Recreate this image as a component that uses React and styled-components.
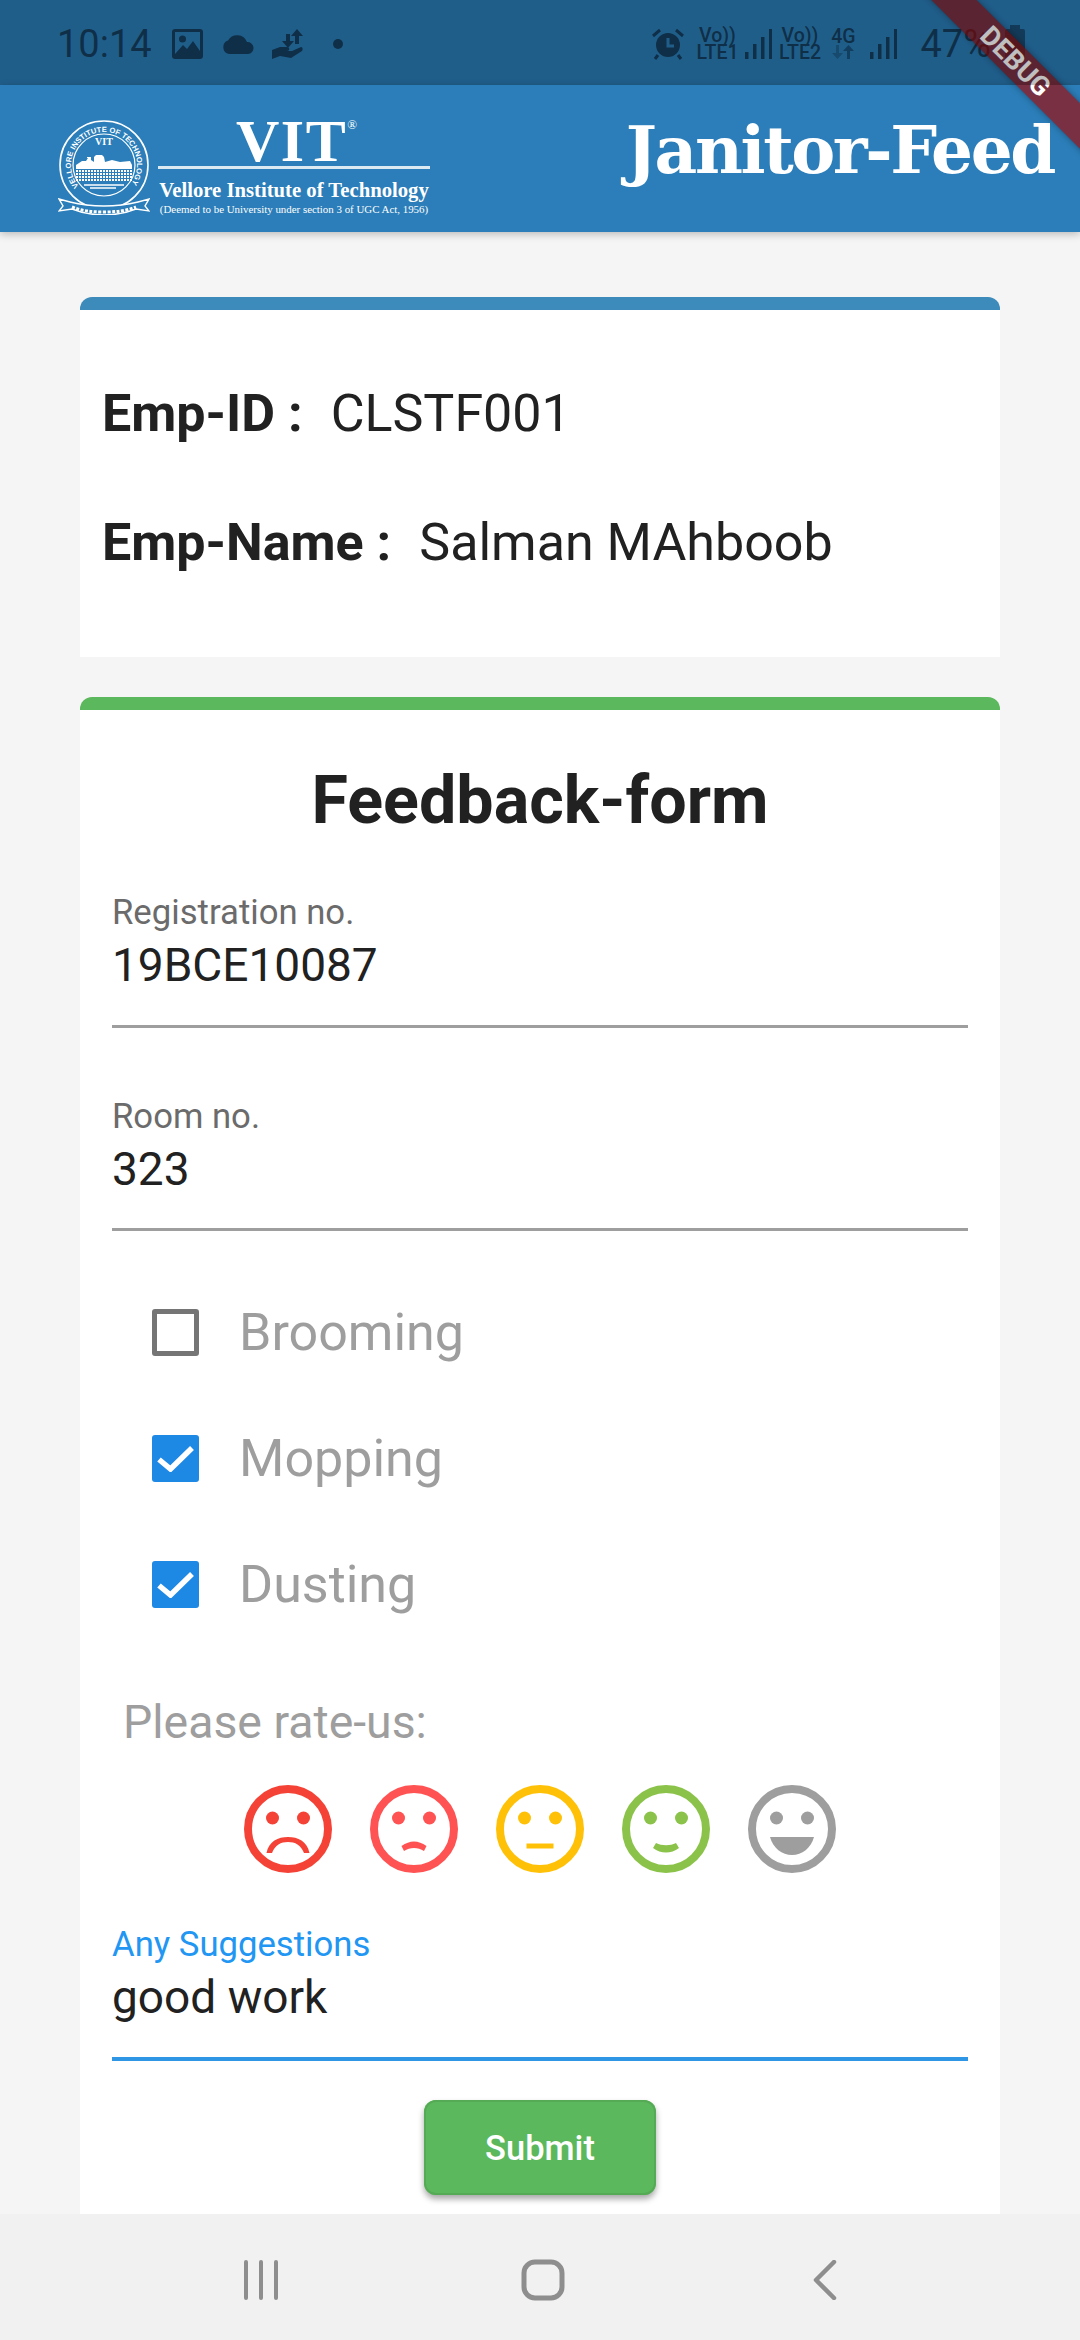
import React from "react";
import styled, { createGlobalStyle } from "styled-components";

const Global = createGlobalStyle`
  html, body { margin: 0; padding: 0; background: #f5f5f5; }
  * { box-sizing: border-box; }
`;

const Page = styled.div`
  position: relative;
  width: 1080px;
  height: 2340px;
  overflow: hidden;
  display: flex;
  flex-direction: column;
  background: #f5f5f5;
  font-family: Roboto, "Liberation Sans", sans-serif;
  color: #212121;
`;
const StatusBar = styled.div`
  height: 85px;
  flex: none;
  background: #2b7eb9;
  color: #153f60;
  display: flex;
  align-items: center;
  justify-content: space-between;
  padding: 2px 55px 0 57px;
`;
const Scrim = styled.div`
  position: absolute;
  z-index: 6;
  left: 0;
  top: 0;
  width: 100%;
  height: 85px;
  background: rgba(0, 0, 0, 0.25);
  pointer-events: none;
`;
const StatusGroup = styled.div`
  display: flex;
  align-items: center;
`;
const Clock = styled.span`
  font-size: 38px;
  margin-right: 20px;
`;
const Net = styled.div`
  display: flex;
  flex-direction: column;
  align-items: center;
  width: ${(p) => p.$width}px;
  margin-left: ${(p) => p.$left}px;
  margin-right: ${(p) => p.$right}px;
  font-size: 19.5px;
  font-weight: 500;
  line-height: 17px;
  white-space: nowrap;
`;
const Battery = styled.span`
  font-size: 38px;
  margin: 0 14px 0 23px;
`;
const BatteryIcon = styled.div`
  position: relative;
  width: 20px;
  height: 30px;
  background: #153f60;
  border-radius: 2px;
  opacity: 0.75;
  &::before {
    content: "";
    position: absolute;
    top: -4px;
    left: 5px;
    width: 10px;
    height: 4px;
    background: #153f60;
  }
`;
const AppBar = styled.header`
  position: relative;
  z-index: 1;
  height: 147px;
  flex: none;
  background: #2b7eb9;
  box-shadow: 0 2px 8px rgba(0, 0, 0, 0.25);
  display: flex;
  align-items: center;
  justify-content: space-between;
  padding: 0 26px 2px 58px;
`;
const Brand = styled.div`
  display: flex;
  align-items: center;
  gap: 8px;
  color: #fff;
  margin-top: 18px;
`;
const Wordmark = styled.div`
  width: 272px;
  display: flex;
  flex-direction: column;
  align-items: center;
  font-family: "Liberation Serif", serif;
  white-space: nowrap;
`;
const Vit = styled.div`
  font-size: 60px;
  line-height: 46px;
  letter-spacing: 1.5px;
  height: 46px;
  font-weight: 700;
  margin-left: 5px;
  & sup {
    font-size: 13px;
    font-weight: 400;
    line-height: 0;
    vertical-align: 32px;
    letter-spacing: 0;
  }
`;
const Rule = styled.div`
  width: 100%;
  height: 3px;
  background: #dbe9f3;
  margin-top: 2px;
`;
const Tagline = styled.div`
  font-size: 20.7px;
  font-weight: 700;
  line-height: 26px;
  margin-top: 8px;
`;
const Legal = styled.div`
  font-size: 10.9px;
  line-height: 12px;
`;
const Title = styled.h1`
  margin: 0 0 15px;
  color: #fff;
  font-family: "DejaVu Serif", serif;
  font-weight: 700;
  font-size: 66px;
  line-height: 1;
  letter-spacing: -2.4px;
`;
const Content = styled.main`
  flex: 1;
  min-height: 0;
  padding: 65px 80px 0;
  display: flex;
  flex-direction: column;
  gap: 40px;
`;
const Card = styled.section`
  background: #fff;
  border-top: 13px solid ${(p) => p.$accent};
  border-radius: 12px 12px 0 0;
  height: ${(p) => p.$height}px;
  flex: none;
`;
const InfoRows = styled.div`
  padding: 73px 22px 0;
  display: flex;
  flex-direction: column;
  gap: 69px;
`;
const InfoRow = styled.div`
  display: flex;
  align-items: center;
  height: 60px;
  font-size: 52px;
  white-space: nowrap;
`;
const InfoLabel = styled.b`
  font-weight: 700;
  margin-right: 28px;
`;
const Form = styled.div`
  padding: 0 32px;
  display: flex;
  flex-direction: column;
`;
const FormTitle = styled.h2`
  margin: 52px 0 0;
  height: 76px;
  font-size: 66.4px;
  line-height: 76px;
  font-weight: 700;
  text-align: center;
`;
const Field = styled.div`
  height: ${(p) => p.$height}px;
  margin-top: ${(p) => p.$top}px;
  border-bottom: ${(p) => (p.$active ? "4px solid #2f96e6" : "3px solid #9e9e9e")};
`;
const FieldLabel = styled.div`
  font-size: 34.7px;
  line-height: 40px;
  color: ${(p) => (p.$active ? "#2196f3" : "#6b6b6b")};
`;
const FieldValue = styled.div`
  font-size: 46px;
  line-height: 56px;
  margin-top: 5px;
`;
const Checks = styled.div`
  margin: 71px 0 0 40px;
  display: flex;
  flex-direction: column;
  gap: 66px;
`;
const CheckRow = styled.div`
  height: 60px;
  display: flex;
  align-items: center;
  gap: 40px;
  font-size: 52px;
  color: #9e9e9e;
`;
const Box = styled.div`
  width: 47px;
  height: 47px;
  flex: none;
  border-radius: 3px;
  background: ${(p) => (p.$on ? "#1e88e5" : "#fff")};
  border: ${(p) => (p.$on ? "none" : "5px solid #757575")};
  display: flex;
  align-items: center;
  justify-content: center;
`;
const RateLabel = styled.div`
  margin: 83px 0 0 11px;
  height: 50px;
  line-height: 50px;
  font-size: 46.4px;
  color: #9e9e9e;
`;
const Faces = styled.div`
  margin-top: 38px;
  display: flex;
  justify-content: center;
  gap: 38px;
`;
const SubmitRow = styled.div`
  margin-top: 39px;
  display: flex;
  justify-content: center;
`;
const Submit = styled.button`
  width: 232px;
  height: 95px;
  border: none;
  border-radius: 12px;
  background: #5cb85c;
  color: #fff;
  font-family: Roboto, sans-serif;
  font-size: 34.5px;
  font-weight: 500;
  box-shadow: 0 4px 6px rgba(0, 0, 0, 0.35), inset 0 0 0 2px #55ab55;
`;
const NavBar = styled.nav`
  height: 126px;
  flex: none;
  background: #f1f1f1;
  display: grid;
  grid-template-columns: repeat(3, 282px);
  align-items: center;
  padding: 6px 0 0 120px;
`;
const NavSlot = styled.div`
  display: flex;
  justify-content: center;
`;
const Ribbon = styled.div`
  position: absolute;
  z-index: 5;
  left: 884px;
  top: 44px;
  width: 260px;
  height: 32px;
  padding-left: 4px;
  transform: rotate(45deg);
  background: rgba(168, 4, 0, 0.64);
  box-shadow: 0 0 7px rgba(0, 0, 0, 0.35);
  color: #fff;
  font-family: Roboto, sans-serif;
  font-weight: 700;
  font-size: 27px;
  line-height: 32px;
  text-align: center;
`;

const SK = "#153f60";
const HOLE = "#2b7eb9";
const Picture = () => (
  <svg width="31" height="30" viewBox="0 0 31 30" style={{ marginRight: 18 }}>
    <rect width="31" height="30" rx="3" fill={SK} />
    <rect x="3" y="3" width="25" height="24" fill={HOLE} />
    <circle cx="10.5" cy="10" r="3.5" fill={SK} />
    <path d="M3 25 L11 16 L15 20 L21 12 L28 22 V27 H3 Z" fill={SK} />
  </svg>
);
const Cloud = () => (
  <svg width="34" height="20" viewBox="0 0 34 20" style={{ marginRight: 17 }}>
    <path d="M8 20 A7 7 0 0 1 7 6.5 A10.5 10.5 0 0 1 26 8 A6 6 0 0 1 27 20 Z" fill={SK} />
  </svg>
);
const HandTransfer = () => (
  <svg width="32" height="30" viewBox="0 0 32 30" style={{ marginRight: 29 }}>
    <path d="M25 0 L31 7 H27 V15 H23 V7 H19 Z M14 5 H18 V12 H22 L16 19 L10 12 H14 Z" fill={SK} />
    <path d="M0 21 L8 18 H15 C18 18 18 22 15 22 H11 L20 22 L29 18 C31 18 31 21 30 22 L19 29 L8 27 L0 30 Z" fill={SK} />
  </svg>
);
const Dot = () => (
  <svg width="10" height="10" viewBox="0 0 10 10">
    <circle cx="5" cy="5" r="5" fill={SK} />
  </svg>
);
const Alarm = () => (
  <svg width="32" height="32" viewBox="0 0 32 32">
    <circle cx="16" cy="17" r="12" fill={SK} />
    <path d="M16 10 V18 H22" stroke={HOLE} strokeWidth="3" fill="none" />
    <path d="M1 8 L8 2 M31 8 L24 2 M6 27 L3 31 M26 27 L29 31" stroke={SK} strokeWidth="3" />
  </svg>
);
const Signal = () => (
  <svg width="27" height="30" viewBox="0 0 27 30">
    <rect x="0" y="23" width="3.5" height="7" fill={SK} />
    <rect x="8" y="15" width="3.5" height="15" fill={SK} />
    <rect x="16" y="8" width="3.5" height="22" fill={SK} />
    <rect x="24" y="0" width="3" height="30" fill={SK} />
  </svg>
);
const DataArrows = () => (
  <svg width="24" height="14" viewBox="0 0 24 14">
    <path d="M5 0 H8 V8 H12 L6.5 14 L1 8 H5 Z" fill="#1f6391" />
    <path d="M16 14 H19 V6 H23 L17.5 0 L12 6 H16 Z" fill="#185480" />
  </svg>
);

const Seal = () => (
  <svg width="92" height="96" viewBox="0 0 92 96">
    <defs>
      <path id="sealArc" d="M20.7 67.2 A33 33 0 1 1 71.3 67.2" />
      <pattern id="bricks" width="3" height="3" patternUnits="userSpaceOnUse">
        <rect width="2" height="2" fill="#fff" />
      </pattern>
    </defs>
    <circle cx="46" cy="46" r="44" fill="none" stroke="#fff" strokeWidth="1.6" />
    <circle cx="46" cy="46" r="31" fill="none" stroke="#fff" strokeWidth="1.2" />
    <text fontFamily="Liberation Sans, sans-serif" fontSize="7.6" fontWeight="700" fill="#fff">
      <textPath href="#sealArc">VELLORE INSTITUTE OF TECHNOLOGY</textPath>
    </text>
    <text x="46" y="26" textAnchor="middle" fontFamily="Liberation Serif, serif" fontWeight="700" fontSize="10" fill="#fff">VIT</text>
    <path d="M18 46 L24 42 H28 L30 39 H29 V38 H33 V41 L36 43 V38 L38 36 H44 L46 38 L47 43 L54 41 L62 43 L72 42 L74 46 V50 H18 Z" fill="#fff" />
    <rect x="18" y="49" width="56" height="14" fill="url(#bricks)" />
    <path d="M26 66 H66 M32 69 H58" stroke="#fff" strokeWidth="1.4" />
    <path d="M1 80 L12 83 C24 86 34 87 46 87 C58 87 68 86 80 83 L91 80 L87 87 L91 92 L78 90 C68 94 58 96 46 96 C34 96 24 94 14 90 L1 92 L5 87 Z" fill="#2b7eb9" stroke="#fff" strokeWidth="1.4" />
    <path d="M14 88 C24 92 34 93 46 93 C58 93 68 92 78 88" fill="none" stroke="#fff" strokeWidth="3" strokeDasharray="3 1.5" />
  </svg>
);

const Check = () => (
  <svg width="37" height="28" viewBox="0 0 37 28">
    <path d="M2 15.5 L13.5 25 L35 4" fill="none" stroke="#fff" strokeWidth="5.5" />
  </svg>
);

const mouths = [
  <path key="0" d="M22.5 68 C25 56 34 52 44 52 C54 52 63 56 65.5 68 H60 C57 60 51 57 44 57 C37 57 31 60 28 68 Z" />,
  <path key="1" d="M31.5 61 C40 55 48 55 56.5 61 L54 66 C48 62 40 62 34 66 Z" />,
  <rect key="2" x="30.5" y="58.5" width="27" height="5" />,
  <path key="3" d="M34 58 C40 61 48 61 54 58 L57 63 C49 69 39 69 31 63 Z" />,
  <path key="4" d="M22 52 H66 C63 63 54 70 44 70 C34 70 25 63 22 52 Z" />,
];
const faceColors = ["#f44336", "#ff5252", "#ffc107", "#8bc34a", "#9e9e9e"];

const Face = ({ index }) => (
  <svg width="88" height="88" viewBox="0 0 88 88" fill={faceColors[index]}>
    <circle cx="44" cy="44" r="40" fill="none" stroke={faceColors[index]} strokeWidth="8" />
    <circle cx="28.5" cy="33" r="6.5" />
    <circle cx="59.5" cy="33" r="6.5" />
    {mouths[index]}
  </svg>
);

const CheckItem = ({ on, children }) => (
  <CheckRow>
    <Box $on={on}>{on && <Check />}</Box>
    {children}
  </CheckRow>
);

export default function App() {
  return (
    <Page>
      <Global />
      <StatusBar>
        <StatusGroup>
          <Clock>10:14</Clock>
          <Picture />
          <Cloud />
          <HandTransfer />
          <Dot />
        </StatusGroup>
        <StatusGroup>
          <Alarm />
          <Net $width={40} $left={13} $right={8}><span>Vo))</span><span>LTE1</span></Net>
          <Signal />
          <Net $width={41} $left={7} $right={11}><span>Vo))</span><span>LTE2</span></Net>
          <Net $width={24} $left={0} $right={15}><span>4G</span><DataArrows /></Net>
          <Signal />
          <Battery>47%</Battery>
          <BatteryIcon />
        </StatusGroup>
      </StatusBar>
      <AppBar>
        <Brand>
          <Seal />
          <Wordmark>
            <Vit>VIT<sup>®</sup></Vit>
            <Rule />
            <Tagline>Vellore Institute of Technology</Tagline>
            <Legal>(Deemed to be University under section 3 of UGC Act, 1956)</Legal>
          </Wordmark>
        </Brand>
        <Title>Janitor-Feed</Title>
      </AppBar>
      <Content>
        <Card $accent="#3d8bbb" $height={360}>
          <InfoRows>
            <InfoRow><InfoLabel>Emp-ID :</InfoLabel>CLSTF001</InfoRow>
            <InfoRow><InfoLabel>Emp-Name :</InfoLabel>Salman MAhboob</InfoRow>
          </InfoRows>
        </Card>
        <Card $accent="#5cb85c" $height={1517}>
          <Form>
            <FormTitle>Feedback-form</FormTitle>
            <Field $height={136} $top={54}>
              <FieldLabel>Registration no.</FieldLabel>
              <FieldValue>19BCE10087</FieldValue>
            </Field>
            <Field $height={135} $top={68}>
              <FieldLabel>Room no.</FieldLabel>
              <FieldValue>323</FieldValue>
            </Field>
            <Checks>
              <CheckItem>Brooming</CheckItem>
              <CheckItem on>Mopping</CheckItem>
              <CheckItem on>Dusting</CheckItem>
            </Checks>
            <RateLabel>Please rate-us:</RateLabel>
            <Faces>
              {faceColors.map((c, i) => <Face key={c} index={i} />)}
            </Faces>
            <Field $height={137} $top={51} $active>
              <FieldLabel $active>Any Suggestions</FieldLabel>
              <FieldValue>good work</FieldValue>
            </Field>
            <SubmitRow><Submit>Submit</Submit></SubmitRow>
          </Form>
        </Card>
      </Content>
      <NavBar>
        <NavSlot>
          <svg width="36" height="40" viewBox="0 0 36 40">
            <path d="M3 2 V38 M18 2 V38 M33 2 V38" stroke="#8e8e8e" strokeWidth="4" strokeLinecap="round" />
          </svg>
        </NavSlot>
        <NavSlot>
          <svg width="44" height="42" viewBox="0 0 44 42">
            <rect x="3" y="3" width="38" height="36" rx="11" fill="none" stroke="#8e8e8e" strokeWidth="5" />
          </svg>
        </NavSlot>
        <NavSlot>
          <svg width="24" height="40" viewBox="0 0 24 40">
            <path d="M21 2 L3 20 L21 38" fill="none" stroke="#8e8e8e" strokeWidth="4.5" strokeLinecap="round" strokeLinejoin="round" />
          </svg>
        </NavSlot>
      </NavBar>
      <Ribbon>DEBUG</Ribbon>
      <Scrim />
    </Page>
  );
}
